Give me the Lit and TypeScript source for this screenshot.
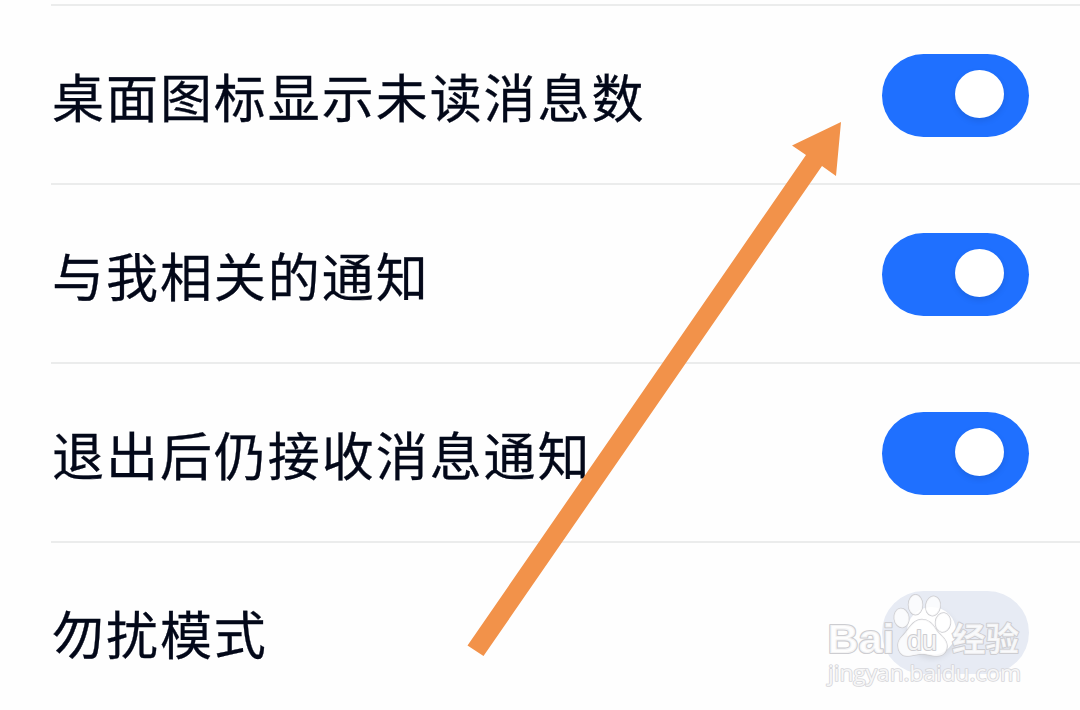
import { LitElement, html, css } from "lit";
import { customElement, property } from "lit/decorators.js";
import { classMap } from "lit/directives/class-map.js";

@customElement("toggle-switch")
export class ToggleSwitch extends LitElement {
  @property({ type: Boolean }) on = false;

  static styles = css`
    :host {
      display: block;
      flex-shrink: 0;
    }

    .track {
      display: flex;
      box-sizing: border-box;
      width: 147px;
      height: 83px;
      padding: 16px 25px;
      border-radius: 42px;
      background: #e7ebf4;
    }

    .track.on {
      justify-content: flex-end;
      background: #1f70ff;
    }

    .knob {
      width: 49px;
      height: 48px;
      border-radius: 50%;
      background: #fff;
      box-shadow: 0 3px 6px rgba(0, 0, 0, 0.1);
    }
  `;

  render() {
    return html`
      <div class=${classMap({ track: true, on: this.on })}>
        <div class="knob"></div>
      </div>
    `;
  }
}

@customElement("app-root")
export class AppRoot extends LitElement {
  static styles = css`
    :host {
      display: block;
      position: relative;
      box-sizing: border-box;
      width: 1080px;
      height: 710px;
      padding: 4px 0 0 51px;
      overflow: hidden;
      background: #fefefe;
      font-family: "Noto Sans CJK SC", sans-serif;
    }

    .row {
      display: flex;
      box-sizing: border-box;
      height: 179px;
      padding: 48px 51px 0 0;
      border-top: 2px solid #ebecec;
      align-items: flex-start;
      justify-content: space-between;
    }

    .label {
      padding-left: 1px;
      color: #030819;
      font-size: 52px;
      line-height: 84px;
      letter-spacing: 1.95px;
      white-space: nowrap;
      -webkit-text-stroke: 0.3px #030819;
    }

    .overlay {
      position: absolute;
      top: 0;
      left: 0;
    }

    .arrow {
      fill: #f2924a;
    }

    .mark {
      fill: #fff;
      fill-opacity: 0.8;
      stroke: #cdcdd1;
      stroke-width: 1.5;
      stroke-linejoin: round;
      paint-order: stroke;
    }

    .brand {
      font: bold 41px "Liberation Sans", sans-serif;
      stroke-width: 2.2;
    }

    .du {
      font: 27px "Liberation Sans", sans-serif;
      stroke-width: 2;
    }

    .name {
      font: bold 33px "Noto Sans CJK SC", sans-serif;
      stroke-width: 2;
    }

    .url {
      font: 21px "Open Sans", sans-serif;
      stroke: #d6d6da;
      stroke-width: 1.6;
    }
  `;

  rows = [
    { label: "桌面图标显示未读消息数", on: true },
    { label: "与我相关的通知", on: true },
    { label: "退出后仍接收消息通知", on: true },
    { label: "勿扰模式", on: false },
  ];

  render() {
    return html`
      ${this.rows.map(
        (row) => html`
          <div class="row">
            <span class="label">${row.label}</span>
            <toggle-switch ?on=${row.on}></toggle-switch>
          </div>
        `
      )}
      <svg class="overlay" width="1080" height="710" viewBox="0 0 1080 710">
        <path class="arrow" d="M841 122 L792 145.500 L806 155 L467.500 645.500 L483.500 656 L822 166 L836 176Z" />
        <g class="mark">
          <text class="brand" x="827.500" y="653" textLength="67" lengthAdjust="spacingAndGlyphs">Bai</text>
          <ellipse cx="901.500" cy="618" rx="7.300" ry="9.500" transform="rotate(-8 901.500 618)" />
          <ellipse cx="915.500" cy="604.800" rx="7" ry="10" />
          <ellipse cx="933" cy="606" rx="7.200" ry="9.700" transform="rotate(10 933 606)" />
          <ellipse cx="943" cy="622.500" rx="7.500" ry="9.500" transform="rotate(8 943 622.500)" />
          <path d="M922 619.500 C929 619.500 933 624 937 631 C941 636 947 639 947 646 C947 652 943 656 937 656 C931 656 928 654 922 654 C916 654 913 656 907 656 C901 656 898 651 898 645 C898 639 903 636 906 632 C911 625 915 619.500 922 619.500Z" />
          <text class="du" x="907" y="650" textLength="30" lengthAdjust="spacingAndGlyphs">du</text>
          <text class="name" x="952" y="650.500" textLength="67" lengthAdjust="spacingAndGlyphs">经验</text>
          <text class="url" x="828" y="681" textLength="193" lengthAdjust="spacingAndGlyphs">jingyan.baidu.com</text>
        </g>
      </svg>
    `;
  }
}
